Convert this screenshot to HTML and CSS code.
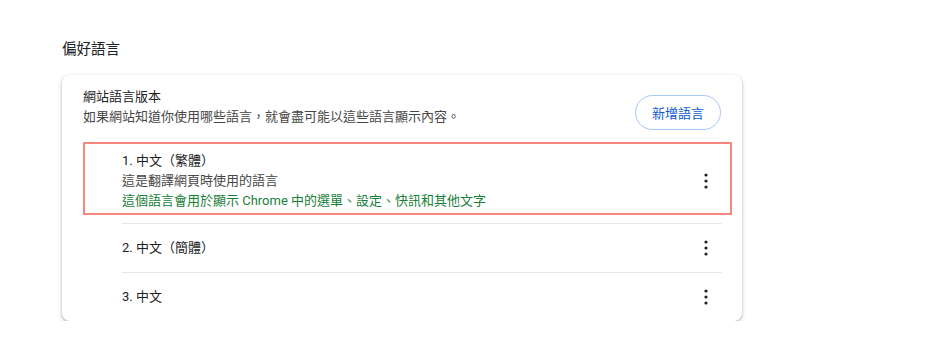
FILE: index.html
```html
<!DOCTYPE html>
<html lang="zh-Hant">
<head>
    <meta charset="UTF-8">
    <title>偏好語言</title>
    <link rel="stylesheet" href="styles.css">
</head>
<body>
    <div class="page">
        <h2 class="section-title">偏好語言</h2>

        <div class="card">
            <div class="card-header">
                <div class="header-text">
                    <div class="label">網站語言版本</div>
                    <div class="sub-label">如果網站知道你使用哪些語言，就會盡可能以這些語言顯示內容。</div>
                </div>
                <button class="add-button">新增語言</button>
            </div>

            <div class="lang-list">
                <div class="lang-item highlighted">
                    <div class="lang-text">
                        <div class="lang-name">1. 中文（繁體）</div>
                        <div class="lang-note">這是翻譯網頁時使用的語言</div>
                        <div class="lang-note ui-lang">這個語言會用於顯示 Chrome 中的選單、設定、快訊和其他文字</div>
                    </div>
                    <button class="more-button" aria-label="更多動作">
                        <svg width="20" height="20" viewBox="0 0 20 20"><circle cx="10" cy="4" r="1.6"/><circle cx="10" cy="10" r="1.6"/><circle cx="10" cy="16" r="1.6"/></svg>
                    </button>
                </div>

                <div class="lang-row">
                    <div class="lang-name">2. 中文（簡體）</div>
                    <button class="more-button" aria-label="更多動作">
                        <svg width="20" height="20" viewBox="0 0 20 20"><circle cx="10" cy="4" r="1.6"/><circle cx="10" cy="10" r="1.6"/><circle cx="10" cy="16" r="1.6"/></svg>
                    </button>
                </div>

                <div class="lang-row">
                    <div class="lang-name">3. 中文</div>
                    <button class="more-button" aria-label="更多動作">
                        <svg width="20" height="20" viewBox="0 0 20 20"><circle cx="10" cy="4" r="1.6"/><circle cx="10" cy="10" r="1.6"/><circle cx="10" cy="16" r="1.6"/></svg>
                    </button>
                </div>
            </div>
        </div>
    </div>
</body>
</html>
```

FILE: styles.css
```css
body {
    margin: 0;
    background: #fff;
    font-family: Roboto, "Noto Sans CJK TC", sans-serif;
    color: #202124;
}
.page {
    padding: 38px 0 0 62px;
    width: 680px;
}
.section-title {
    margin: 0 0 13px 0;
    font-size: 14.5px;
    font-weight: normal;
    line-height: 24px;
}
.card {
    background: #fff;
    border-radius: 8px;
    box-shadow: 0 1px 2px rgba(60, 64, 67, 0.3), 0 2px 4px 1px rgba(60, 64, 67, 0.15);
}
.card-header {
    display: flex;
    justify-content: space-between;
    align-items: flex-start;
    padding: 12px 21px 0 21px;
    font-size: 13px;
    line-height: 20px;
}
.sub-label {
    color: #474747;
}
.add-button {
    margin-top: 8px;
    height: 35px;
    padding: 0 16px;
    border: 1px solid #a8c7fa;
    border-radius: 18px;
    background: #fff;
    color: #0b57d0;
    font-family: inherit;
    font-size: 13px;
    cursor: pointer;
}
.lang-list {
    font-size: 13px;
    line-height: 20px;
}
.lang-item.highlighted {
    display: flex;
    justify-content: space-between;
    align-items: center;
    margin: 12px 10px 8px 21px;
    padding: 7px 8px 2px 37px;
    border: 2px solid #f8877f;
}
.lang-note {
    color: #474747;
}
.lang-note.ui-lang {
    color: #188038;
}
.lang-row {
    display: flex;
    justify-content: space-between;
    align-items: center;
    height: 48px;
    margin: 0 20px 0 60px;
    border-top: 1px solid #e8e8e8;
}
.more-button {
    width: 32px;
    height: 32px;
    padding: 0;
    border: none;
    background: none;
    display: flex;
    align-items: center;
    justify-content: center;
    cursor: pointer;
}
.more-button svg {
    fill: #202124;
}
```
